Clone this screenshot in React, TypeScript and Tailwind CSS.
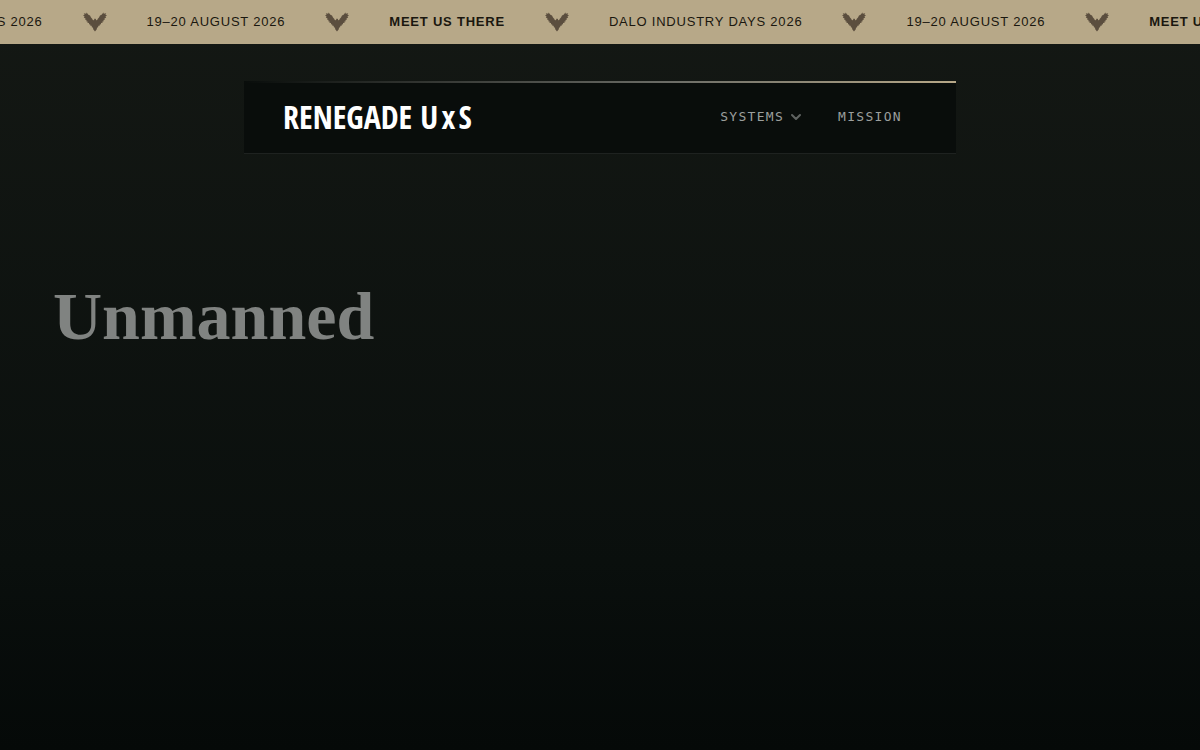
import { ChevronDown } from 'lucide-react'

interface TickerItem {
  text: string
  strong?: boolean
}

const ANNOUNCEMENT: TickerItem[] = [
  { text: 'DALO INDUSTRY DAYS 2026' },
  { text: '19–20 AUGUST 2026' },
  { text: 'MEET US THERE', strong: true },
]

function BirdMark() {
  return (
    <svg viewBox="0 0 24 20" className="h-5 w-6 shrink-0 text-[#5b4e3e]" fill="currentColor" aria-hidden="true">
      {/* wings and tail */}
      <path d="M3.6 0.6 5.4 2.8 7 3.6 8 5.6 9.2 6.8 9.8 8 11 8.2 11.3 7 12 6.4 13 7.2 13 8.2 14.2 8 14.8 6.8 16 5.6 17 3.6 18.6 2.8 20.4 0.6 20.8 1.8 23.2 1.2 22.4 2.8 24 3.2 22.4 4.6 23.2 5.4 21.4 6.4 22 7.4 20.4 8 20.8 9.2 19.4 9.6 19.6 10.8 18 11 18 12.2 16.8 12.4 16.6 13.8 15.4 13.8 15 15.4 14 15.4 13.8 17.2 12 19.4 10.2 17.2 10 15.4 9 15.4 8.6 13.8 7.4 13.8 7.2 12.4 6 12.2 6 11 4.4 10.8 4.6 9.6 3.2 9.2 3.6 8 2 7.4 2.6 6.4 0.8 5.4 1.6 4.6 0 3.2 1.6 2.8 0.8 1.2 3.2 1.8Z" />
    </svg>
  )
}

function Ticker() {
  const items = [...ANNOUNCEMENT, ...ANNOUNCEMENT, ...ANNOUNCEMENT, ...ANNOUNCEMENT]
  return (
    <div className="h-11 overflow-hidden bg-[#b7a888] text-[#1a170f]">
      <div className="-ml-[151px] flex h-full w-max items-center gap-10 text-[13px] tracking-[0.06em]">
        {items.map((item, i) => (
          <div key={i} className="flex items-center gap-10 whitespace-nowrap">
            <span className={item.strong ? 'font-bold' : ''}>{item.text}</span>
            <BirdMark />
          </div>
        ))}
      </div>
    </div>
  )
}

export default function App() {
  return (
    <div className="min-h-screen bg-linear-to-b from-[#141814] via-[#0a0f0d] via-75% to-[#050908] font-['Liberation_Sans',sans-serif]">
      <Ticker />

      <header className="mx-auto mt-[37px] w-full max-w-[712px] border-b border-[#1e2220] bg-[#090d0b]">
        <div className="h-0.5 bg-linear-to-r from-[#8f918c]/0 via-[#6c6d67] via-60% to-[#b7a888]" />
        <div className="flex h-[70px] items-center justify-between pr-[54px] pb-0.5 pl-[39px]">
          <a
            href="#home"
            className="flex gap-2 font-['Open_Sans_Condensed','Roboto_Condensed',sans-serif] text-[32px] leading-8 font-bold text-white"
          >
            <span>RENEGADE</span>
            <span className="tracking-widest">UxS</span>
          </a>
          <nav className="flex items-center gap-[34px] font-['DejaVu_Sans_Mono',monospace] text-[13px] leading-4 tracking-widest text-[#9c9f9d]">
            <button type="button" className="flex items-center gap-1">
              SYSTEMS
              <ChevronDown className="size-4 text-[#5f6361]" strokeWidth={3} />
            </button>
            <a href="#mission">MISSION</a>
          </nav>
        </div>
      </header>

      <main className="px-[53px] pt-[122px]">
        <h1 className="font-['Liberation_Serif',serif] text-[68px] leading-20 font-bold text-[#808381]">Unmanned</h1>
      </main>
    </div>
  )
}
